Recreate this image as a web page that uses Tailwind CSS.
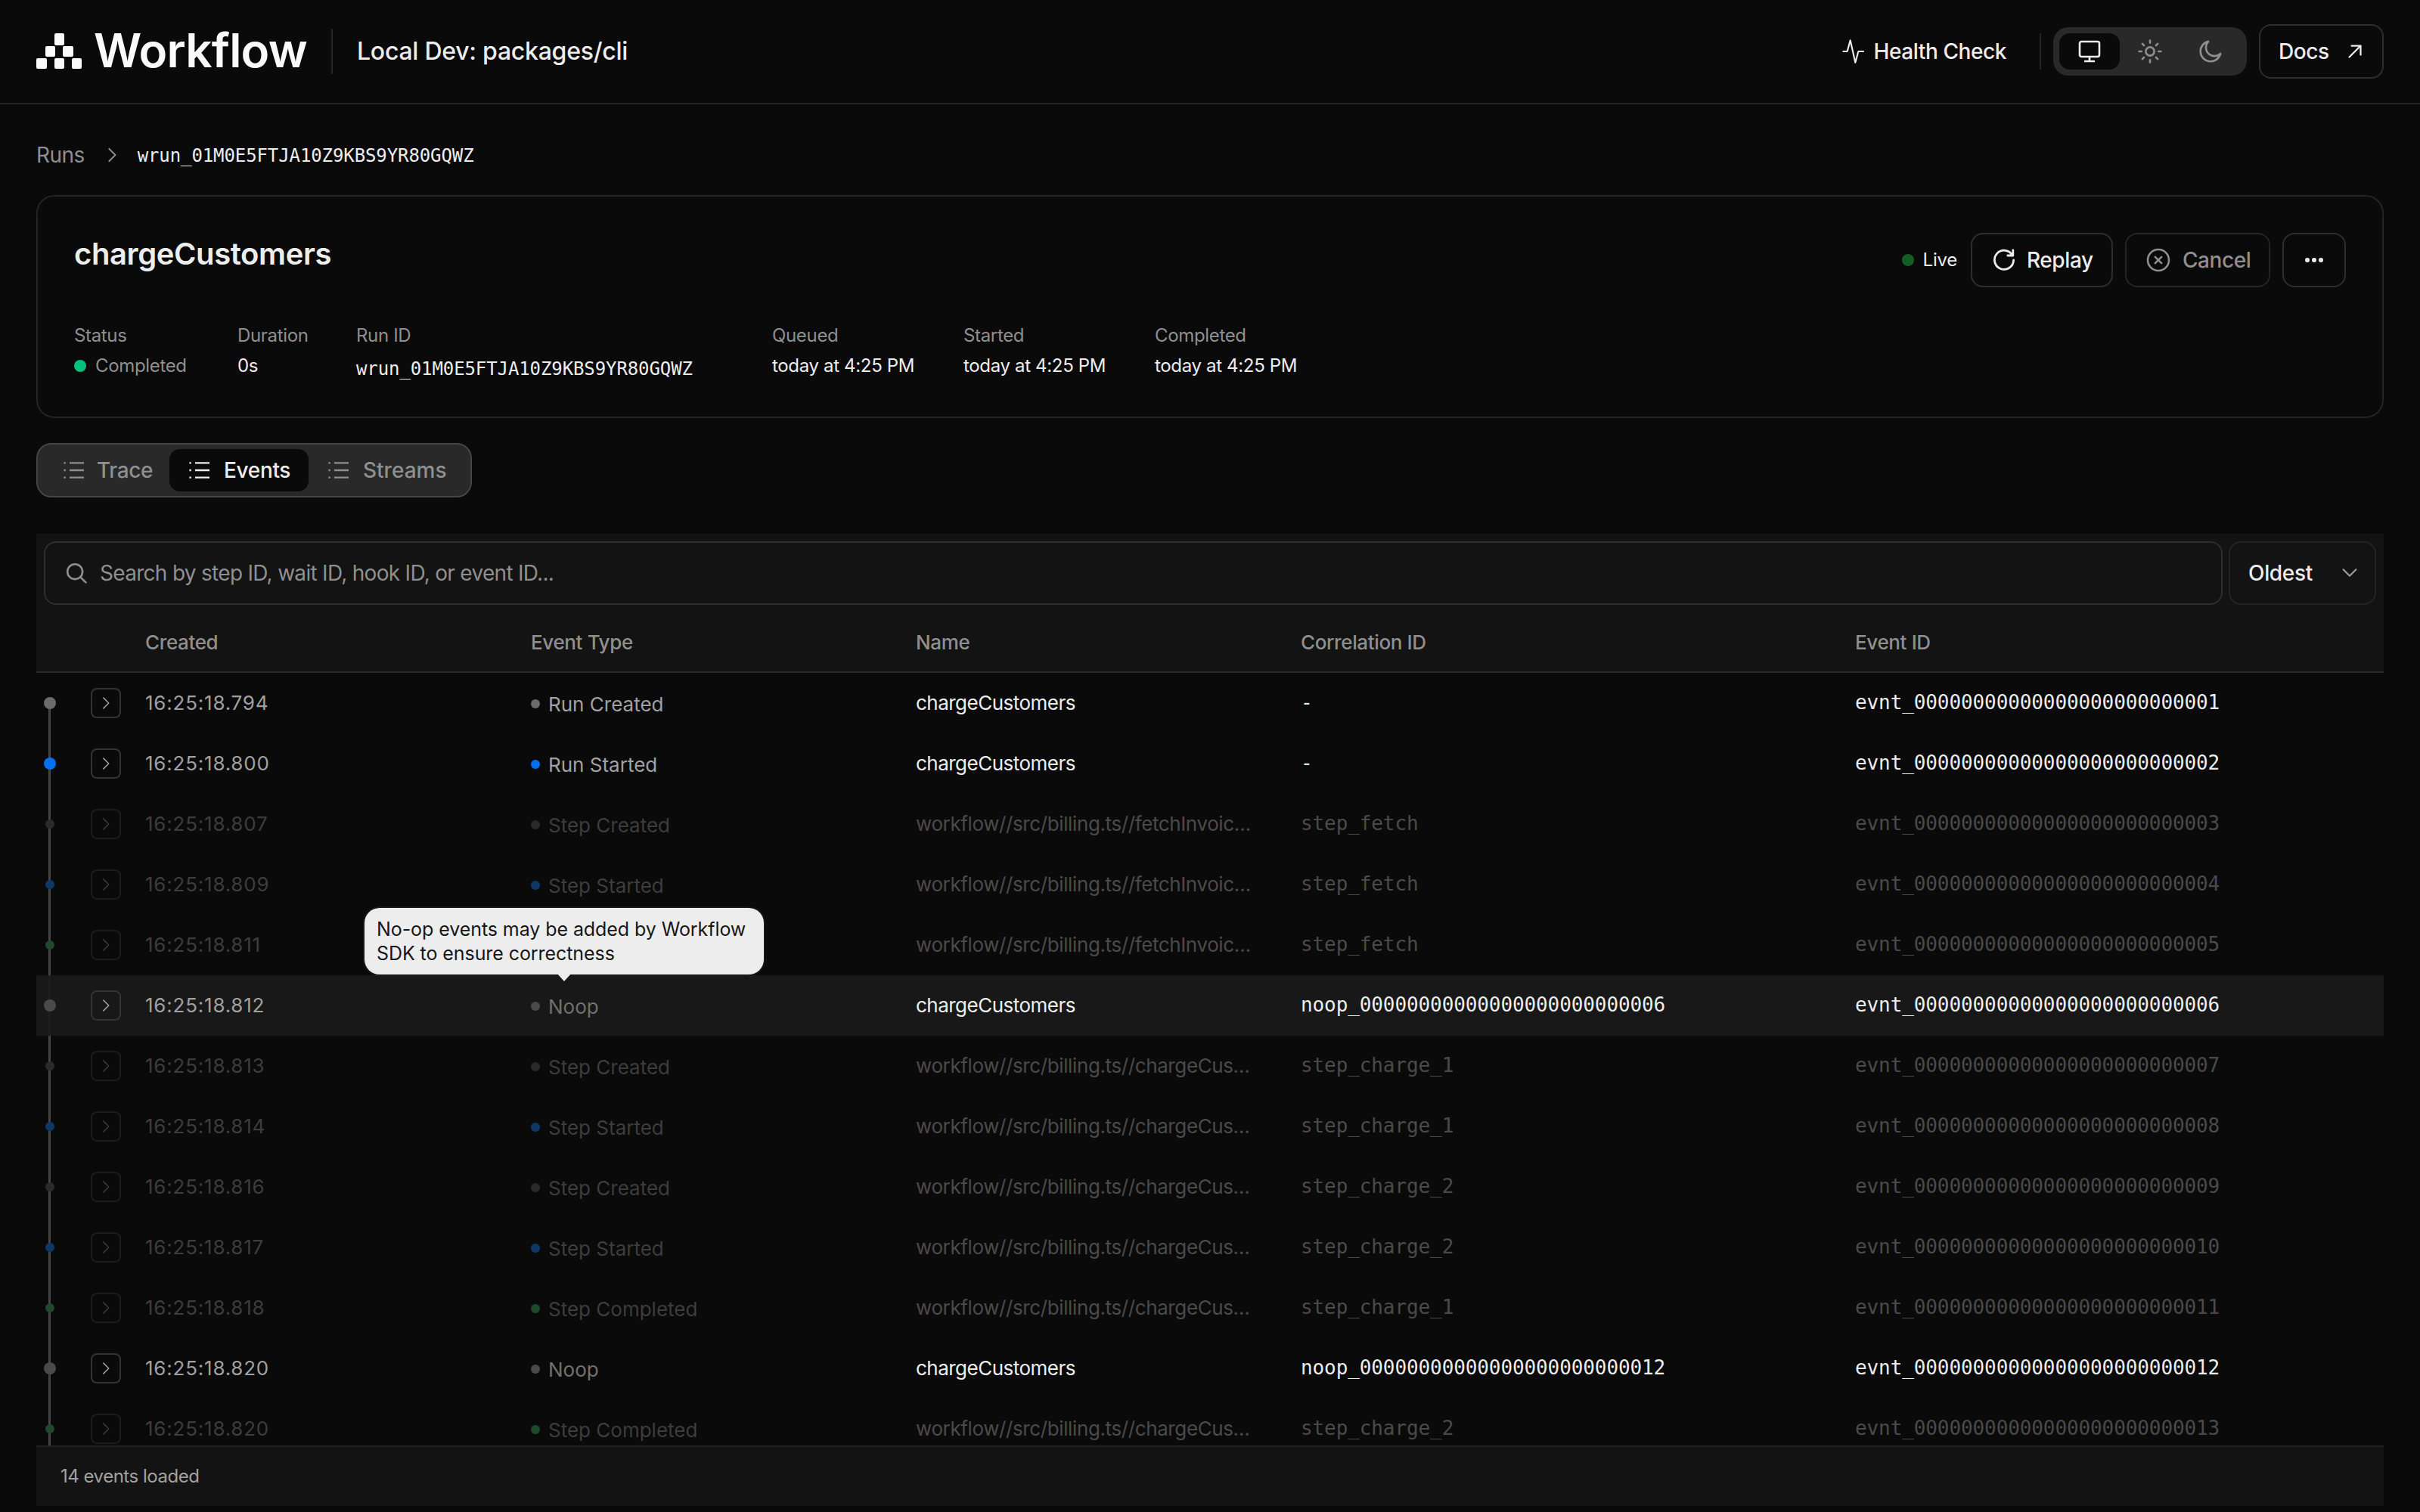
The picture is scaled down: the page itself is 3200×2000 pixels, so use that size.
<!DOCTYPE html>
<html lang="en">
<head>
<meta charset="utf-8">
<title>Workflow</title>
<script src="https://cdn.jsdelivr.net/npm/@tailwindcss/browser@4"></script>
</head>
<body class="bg-[#0a0a0a] font-['Inter',sans-serif] text-[#ededed]">
<div class="w-[3200px] h-[2000px] overflow-hidden flex flex-col">
  <header class="h-[138px] shrink-0 border-b-2 border-[#242424] flex items-center pl-[48px] pr-[48px]">
    <svg class="w-[60px] h-[47px] mt-[-2px]" viewBox="0 0 60 47" fill="#fafafa"><rect x="24" y="0" width="13" height="16" rx="2"/><rect x="12" y="17" width="13" height="14" rx="2"/><rect x="35" y="17" width="14" height="14" rx="2"/><rect x="24" y="33" width="13" height="14" rx="2"/><rect x="0" y="33" width="14" height="14" rx="2"/><rect x="47" y="33" width="13" height="14" rx="2"/></svg>
    <span class="ml-[16px] text-[62px] leading-none font-semibold tracking-[-0.012em] text-[#fafafa] mt-[-2px]">Workflow</span>
    <div class="w-[2px] h-[60px] bg-[#242424] ml-[32px]"></div>
    <span class="ml-[32px] text-[32px] font-medium tracking-[-0.008em] text-[#ededed]">Local Dev: packages/cli</span>
    <div class="ml-auto flex items-center">
      <svg class="w-[32px] h-[32px] text-[#ededed]" viewBox="0 0 24 24" fill="none" stroke="currentColor" stroke-width="1.6" stroke-linecap="round" stroke-linejoin="round"><path d="M1 12h4l3-11 5 22 3-11h5"/></svg>
      <span class="ml-[10px] text-[28px] font-medium tracking-[-0.015em]">Health Check</span>
      <div class="ml-[44px] w-[2px] h-[48px] bg-[#242424]"></div>
      <div class="ml-[16px] w-[256px] h-[64px] rounded-[20px] bg-[#292929] p-[8px] flex">
        <div class="w-[80px] h-[48px] rounded-[14px] bg-[#0a0a0a] flex items-center justify-center">
          <svg class="w-[32px] h-[32px] text-[#ededed]" viewBox="0 0 16 16" fill="none" stroke="currentColor" stroke-width="1.3" stroke-linejoin="round"><rect x="1.5" y="1.5" width="13" height="10" rx="1.2"/><path d="M8 11.5V14.5M4.5 14.5h7"/></svg>
        </div>
        <div class="w-[80px] h-[48px] flex items-center justify-center">
          <svg class="w-[32px] h-[32px] text-[#8f8f8f]" viewBox="0 0 16 16" fill="none" stroke="currentColor" stroke-width="1.3" stroke-linecap="round"><circle cx="8" cy="8" r="2.8"/><path d="M8 .8v1.6M8 13.6v1.6M.8 8h1.6M13.6 8h1.6M2.9 2.9l1.1 1.1M12 12l1.1 1.1M2.9 13.1 4 12M12 4l1.1-1.1"/></svg>
        </div>
        <div class="w-[80px] h-[48px] flex items-center justify-center">
          <svg class="w-[32px] h-[32px] text-[#8f8f8f]" viewBox="0 0 16 16" fill="none" stroke="currentColor" stroke-width="1.3" stroke-linejoin="round"><path d="M6.6 1.4A6.7 6.7 0 1 0 14.6 9.4 5.6 5.6 0 0 1 6.6 1.4Z"/></svg>
        </div>
      </div>
      <div class="ml-[16px] w-[165px] h-[72px] rounded-[16px] border-2 border-[#2e2e2e] flex items-center pl-[24px]">
        <span class="text-[28px] font-medium tracking-[-0.015em]">Docs</span>
        <svg class="ml-[22px] w-[24px] h-[24px]" viewBox="0 0 16 16" fill="none" stroke="currentColor" stroke-width="1.5" stroke-linecap="round" stroke-linejoin="round"><path d="M3 13 13 3M5 3h8v8"/></svg>
      </div>
    </div>
  </header>

  <main class="flex-1 px-[48px] flex flex-col min-h-0">
    <div class="h-[120px] shrink-0 flex items-center pt-[14px]">
      <span class="text-[28px] text-[#8f8f8f] tracking-[-0.02em]">Runs</span>
      <svg class="ml-[24px] w-[24px] h-[24px] text-[#8f8f8f]" viewBox="0 0 16 16" fill="none" stroke="currentColor" stroke-width="1.2" stroke-linecap="round" stroke-linejoin="round"><path d="M5.5 2.5 11 8l-5.5 5.5"/></svg>
      <span class="ml-[22px] mt-[2px] font-['DejaVu_Sans_Mono',monospace] text-[24px] tracking-[-0.1px] text-[#ededed]">wrun_01M0E5FTJA10Z9KBS9YR80GQWZ</span>
    </div>

    <section class="h-[295px] shrink-0 rounded-[24px] border-2 border-[#242424] px-[48px] pt-[48px]">
      <div class="flex items-start justify-between h-[72px]">
        <h1 class="text-[40px] font-semibold tracking-[-0.01em] leading-[56px] text-[#ededed]">chargeCustomers</h1>
        <div class="flex items-center">
          <span class="w-[16px] h-[16px] rounded-full bg-[#165c26]"></span>
          <span class="ml-[12px] text-[24px] tracking-[-0.01em]">Live</span>
          <div class="ml-[18px] w-[188px] h-[72px] rounded-[16px] border-2 border-[#2e2e2e] flex items-center pl-[26px]">
            <svg class="w-[32px] h-[32px]" viewBox="0 0 16 16" fill="none" stroke="currentColor" stroke-width="1.4" stroke-linecap="round" stroke-linejoin="round"><path d="M13.6 5A6.3 6.3 0 1 0 14.3 8M13.9 1.5V5h-3.5"/></svg>
            <span class="ml-[14px] text-[28px] font-medium tracking-[-0.015em]">Replay</span>
          </div>
          <div class="ml-[16px] w-[192px] h-[72px] rounded-[16px] border-2 border-[#242424] flex items-center pl-[26px] text-[#8f8f8f]">
            <svg class="w-[32px] h-[32px]" viewBox="0 0 16 16" fill="none" stroke="currentColor" stroke-width="1.3" stroke-linecap="round"><circle cx="8" cy="8" r="7"/><path d="m5.9 5.9 4.2 4.2M10.1 5.9l-4.2 4.2"/></svg>
            <span class="ml-[16px] text-[28px] font-medium tracking-[-0.015em]">Cancel</span>
          </div>
          <div class="ml-[16px] w-[84px] h-[72px] rounded-[16px] border-2 border-[#2e2e2e] flex items-center justify-center">
            <svg class="w-[28px] h-[10px]" viewBox="0 0 28 10" fill="currentColor"><circle cx="5" cy="5" r="3"/><circle cx="14" cy="5" r="3"/><circle cx="23" cy="5" r="3"/></svg>
          </div>
        </div>
      </div>
      <dl class="mt-[48px] flex items-start text-[24px] tracking-[-0.014em]">
        <div class="w-[152px]">
          <dt class="text-[#8f8f8f] leading-[32px]">Status</dt>
          <dd class="mt-[8px] flex items-center leading-[32px] text-[#8f8f8f]"><span class="w-[16px] h-[16px] rounded-full bg-[#00c27c] mr-[12px]"></span>Completed</dd>
        </div>
        <div class="ml-[64px] w-[93px]">
          <dt class="text-[#8f8f8f] leading-[32px]">Duration</dt>
          <dd class="mt-[8px] leading-[32px] text-[#ededed]">0s</dd>
        </div>
        <div class="ml-[64px] w-[486px]">
          <dt class="text-[#8f8f8f] leading-[32px]">Run ID</dt>
          <dd class="mt-[12px] leading-[32px] text-[#ededed] font-['DejaVu_Sans_Mono',monospace] tracking-[-0.1px]">wrun_01M0E5FTJA10Z9KBS9YR80GQWZ</dd>
        </div>
        <div class="ml-[64px] w-[189px]">
          <dt class="text-[#8f8f8f] leading-[32px]">Queued</dt>
          <dd class="mt-[8px] leading-[32px] text-[#ededed] whitespace-nowrap">today at 4:25 PM</dd>
        </div>
        <div class="ml-[64px] w-[189px]">
          <dt class="text-[#8f8f8f] leading-[32px]">Started</dt>
          <dd class="mt-[8px] leading-[32px] text-[#ededed] whitespace-nowrap">today at 4:25 PM</dd>
        </div>
        <div class="ml-[64px] w-[189px]">
          <dt class="text-[#8f8f8f] leading-[32px]">Completed</dt>
          <dd class="mt-[8px] leading-[32px] text-[#ededed] whitespace-nowrap">today at 4:25 PM</dd>
        </div>
      </dl>
    </section>

    <nav class="mt-[33px] w-[576px] h-[72px] shrink-0 rounded-[20px] bg-[#292929] border-2 border-[#454545] p-[6px] flex text-[28px] font-medium tracking-[-0.012em] text-[#8f8f8f]">
      <div class="w-[168px] flex items-center pl-[26px]">
        <svg class="w-[32px] h-[32px]" viewBox="0 0 16 16" fill="none" stroke="currentColor" stroke-width="1.2"><path d="M5 3.2h9.5M5 8h9.5M5 12.8h9.5M1.2 3.2h1.2M1.2 8h1.2M1.2 12.8h1.2"/></svg>
        <span class="ml-[14px]">Trace</span>
      </div>
      <div class="w-[184px] rounded-[14px] bg-[#0a0a0a] flex items-center pl-[24px] text-[#ededed]">
        <svg class="w-[32px] h-[32px]" viewBox="0 0 16 16" fill="none" stroke="currentColor" stroke-width="1.2"><path d="M5 3.2h9.5M5 8h9.5M5 12.8h9.5M1.2 3.2h1.2M1.2 8h1.2M1.2 12.8h1.2"/></svg>
        <span class="ml-[16px]">Events</span>
      </div>
      <div class="flex-1 flex items-center pl-[24px]">
        <svg class="w-[32px] h-[32px]" viewBox="0 0 16 16" fill="none" stroke="currentColor" stroke-width="1.2"><path d="M5 3.2h9.5M5 8h9.5M5 12.8h9.5M1.2 3.2h1.2M1.2 8h1.2M1.2 12.8h1.2"/></svg>
        <span class="ml-[16px] tracking-normal">Streams</span>
      </div>
    </nav>

    <section class="mt-[48px] h-[1286px] shrink-0 flex flex-col relative">
      <div class="bg-[#131313] border-b-2 border-[#2a2a2a] shrink-0">
        <div class="flex gap-[8px] p-[10px] pb-0">
          <div class="flex-1 h-[84px] rounded-[16px] border-2 border-[#2e2e2e] flex items-center pl-[26px]">
            <svg class="w-[30px] h-[30px] text-[#8f8f8f]" viewBox="0 0 16 16" fill="none" stroke="currentColor" stroke-width="1.4" stroke-linecap="round"><circle cx="7" cy="7" r="5.3"/><path d="m11 11 3.6 3.6"/></svg>
            <span class="ml-[16px] text-[28px] text-[#8f8f8f] tracking-[-0.025em]">Search by step ID, wait ID, hook ID, or event ID...</span>
          </div>
          <div class="w-[195px] h-[84px] rounded-[16px] border-2 border-[#242424] flex items-center pl-[24px]">
            <span class="text-[28px] font-medium tracking-[-0.012em]">Oldest</span>
            <svg class="ml-[34px] w-[30px] h-[30px] text-[#a1a1a1]" viewBox="0 0 16 16" fill="none" stroke="currentColor" stroke-width="1.1" stroke-linecap="round" stroke-linejoin="round"><path d="m3.5 5.5 4.5 4.5 4.5-4.5"/></svg>
          </div>
        </div>
        <div class="h-[88px] pt-[10px] flex items-center text-[26px] font-medium tracking-[-0.014em] text-[#8f8f8f]">
          <div class="w-[144px] shrink-0"></div>
          <div class="w-[510px]">Created</div>
          <div class="w-[509px]">Event Type</div>
          <div class="w-[509px]">Name</div>
          <div class="w-[733px]">Correlation ID</div>
          <div>Event ID</div>
        </div>
      </div>

      <div class="flex-1 min-h-0 overflow-hidden relative text-[26px]">
        <div class="absolute left-[16px] top-[40px] bottom-0 w-[3px] bg-[#454545]"></div>

        <div class="relative h-[80px] flex items-center">
          <div class="w-[144px] shrink-0 flex items-center"><div class="ml-[10px] w-[16px] flex justify-center"><span class="w-[16px] h-[16px] rounded-full bg-[#6b6b6b]"></span></div><div class="ml-[46px] w-[40px] h-[40px] rounded-[8px] border-2 border-[#333] flex items-center justify-center text-[#a1a1a1]"><svg class="w-[20px] h-[20px]" viewBox="0 0 16 16" fill="none" stroke="currentColor" stroke-width="1.2" stroke-linecap="round" stroke-linejoin="round"><path d="M5.5 2.5 11 8l-5.5 5.5"/></svg></div></div>
          <div class="w-[510px] pb-[2px] tracking-[0.03em] text-[#a1a1a1]">16:25:18.794</div>
          <div class="w-[509px] flex items-center pt-[2px] text-[#a1a1a1]"><span class="w-[12px] h-[12px] rounded-full bg-[#6b6b6b] mr-[11px]"></span>Run Created</div>
          <div class="w-[509px] pb-[2px] pr-[65px] truncate tracking-[-0.02em] text-[#ededed]">chargeCustomers</div>
          <div class="w-[733px] pb-[2px] font-['DejaVu_Sans_Mono',monospace] tracking-[-0.1px] text-[#ededed]">-</div>
          <div class="pb-[2px] font-['DejaVu_Sans_Mono',monospace] tracking-[-0.1px] text-[#ededed]">evnt_00000000000000000000000001</div>
        </div>

        <div class="relative h-[80px] flex items-center">
          <div class="w-[144px] shrink-0 flex items-center"><div class="ml-[10px] w-[16px] flex justify-center"><span class="w-[16px] h-[16px] rounded-full bg-[#0070f3]"></span></div><div class="ml-[46px] w-[40px] h-[40px] rounded-[8px] border-2 border-[#333] flex items-center justify-center text-[#a1a1a1]"><svg class="w-[20px] h-[20px]" viewBox="0 0 16 16" fill="none" stroke="currentColor" stroke-width="1.2" stroke-linecap="round" stroke-linejoin="round"><path d="M5.5 2.5 11 8l-5.5 5.5"/></svg></div></div>
          <div class="w-[510px] pb-[2px] tracking-[0.03em] text-[#a1a1a1]">16:25:18.800</div>
          <div class="w-[509px] flex items-center pt-[2px] text-[#a1a1a1]"><span class="w-[12px] h-[12px] rounded-full bg-[#0070f3] mr-[11px]"></span>Run Started</div>
          <div class="w-[509px] pb-[2px] pr-[65px] truncate tracking-[-0.02em] text-[#ededed]">chargeCustomers</div>
          <div class="w-[733px] pb-[2px] font-['DejaVu_Sans_Mono',monospace] tracking-[-0.1px] text-[#ededed]">-</div>
          <div class="pb-[2px] font-['DejaVu_Sans_Mono',monospace] tracking-[-0.1px] text-[#ededed]">evnt_00000000000000000000000002</div>
        </div>

        <div class="relative h-[80px] flex items-center">
          <div class="w-[144px] shrink-0 flex items-center"><div class="ml-[10px] w-[16px] flex justify-center"><span class="w-[12px] h-[12px] rounded-full bg-[#2a2a2a]"></span></div><div class="ml-[46px] w-[40px] h-[40px] rounded-[8px] border-2 border-[#1c1c1c] flex items-center justify-center text-[#3a3a3a]"><svg class="w-[20px] h-[20px]" viewBox="0 0 16 16" fill="none" stroke="currentColor" stroke-width="1.2" stroke-linecap="round" stroke-linejoin="round"><path d="M5.5 2.5 11 8l-5.5 5.5"/></svg></div></div>
          <div class="w-[510px] pb-[2px] tracking-[0.03em] text-[#3d3d3d]">16:25:18.807</div>
          <div class="w-[509px] flex items-center pt-[2px] text-[#3d3d3d]"><span class="w-[12px] h-[12px] rounded-full bg-[#2a2a2a] mr-[11px]"></span>Step Created</div>
          <div class="w-[509px] pb-[2px] pr-[65px] truncate tracking-[-0.015em] text-[#4a4a4a]">workflow//src/billing.ts//fetchInvoiceBatch</div>
          <div class="w-[733px] pb-[2px] font-['DejaVu_Sans_Mono',monospace] tracking-[-0.1px] text-[#4a4a4a]">step_fetch</div>
          <div class="pb-[2px] font-['DejaVu_Sans_Mono',monospace] tracking-[-0.1px] text-[#4a4a4a]">evnt_00000000000000000000000003</div>
        </div>

        <div class="relative h-[80px] flex items-center">
          <div class="w-[144px] shrink-0 flex items-center"><div class="ml-[10px] w-[16px] flex justify-center"><span class="w-[12px] h-[12px] rounded-full bg-[#0c3a66]"></span></div><div class="ml-[46px] w-[40px] h-[40px] rounded-[8px] border-2 border-[#1c1c1c] flex items-center justify-center text-[#3a3a3a]"><svg class="w-[20px] h-[20px]" viewBox="0 0 16 16" fill="none" stroke="currentColor" stroke-width="1.2" stroke-linecap="round" stroke-linejoin="round"><path d="M5.5 2.5 11 8l-5.5 5.5"/></svg></div></div>
          <div class="w-[510px] pb-[2px] tracking-[0.03em] text-[#3d3d3d]">16:25:18.809</div>
          <div class="w-[509px] flex items-center pt-[2px] text-[#3d3d3d]"><span class="w-[12px] h-[12px] rounded-full bg-[#0c3a66] mr-[11px]"></span>Step Started</div>
          <div class="w-[509px] pb-[2px] pr-[65px] truncate tracking-[-0.015em] text-[#4a4a4a]">workflow//src/billing.ts//fetchInvoiceBatch</div>
          <div class="w-[733px] pb-[2px] font-['DejaVu_Sans_Mono',monospace] tracking-[-0.1px] text-[#4a4a4a]">step_fetch</div>
          <div class="pb-[2px] font-['DejaVu_Sans_Mono',monospace] tracking-[-0.1px] text-[#4a4a4a]">evnt_00000000000000000000000004</div>
        </div>

        <div class="relative h-[80px] flex items-center">
          <div class="w-[144px] shrink-0 flex items-center"><div class="ml-[10px] w-[16px] flex justify-center"><span class="w-[12px] h-[12px] rounded-full bg-[#1f4a2a]"></span></div><div class="ml-[46px] w-[40px] h-[40px] rounded-[8px] border-2 border-[#1c1c1c] flex items-center justify-center text-[#3a3a3a]"><svg class="w-[20px] h-[20px]" viewBox="0 0 16 16" fill="none" stroke="currentColor" stroke-width="1.2" stroke-linecap="round" stroke-linejoin="round"><path d="M5.5 2.5 11 8l-5.5 5.5"/></svg></div></div>
          <div class="w-[510px] pb-[2px] tracking-[0.03em] text-[#3d3d3d]">16:25:18.811</div>
          <div class="w-[509px] flex items-center pt-[2px] text-[#3d3d3d]"><span class="w-[12px] h-[12px] rounded-full bg-[#1f4a2a] mr-[11px]"></span>Step Completed</div>
          <div class="w-[509px] pb-[2px] pr-[65px] truncate tracking-[-0.015em] text-[#4a4a4a]">workflow//src/billing.ts//fetchInvoiceBatch</div>
          <div class="w-[733px] pb-[2px] font-['DejaVu_Sans_Mono',monospace] tracking-[-0.1px] text-[#4a4a4a]">step_fetch</div>
          <div class="pb-[2px] font-['DejaVu_Sans_Mono',monospace] tracking-[-0.1px] text-[#4a4a4a]">evnt_00000000000000000000000005</div>
        </div>

        <div class="relative h-[80px] flex items-center bg-[#191919]/90">
          <div class="w-[144px] shrink-0 flex items-center"><div class="ml-[10px] w-[16px] flex justify-center"><span class="w-[16px] h-[16px] rounded-full bg-[#4a4a4a]"></span></div><div class="ml-[46px] w-[40px] h-[40px] rounded-[8px] border-2 border-[#333] flex items-center justify-center text-[#a1a1a1]"><svg class="w-[20px] h-[20px]" viewBox="0 0 16 16" fill="none" stroke="currentColor" stroke-width="1.2" stroke-linecap="round" stroke-linejoin="round"><path d="M5.5 2.5 11 8l-5.5 5.5"/></svg></div></div>
          <div class="w-[510px] pb-[2px] tracking-[0.03em] text-[#a1a1a1]">16:25:18.812</div>
          <div class="w-[509px] flex items-center pt-[2px] text-[#707070]"><span class="w-[12px] h-[12px] rounded-full bg-[#4a4a4a] mr-[11px]"></span>Noop</div>
          <div class="w-[509px] pb-[2px] pr-[65px] truncate tracking-[-0.02em] text-[#ededed]">chargeCustomers</div>
          <div class="w-[733px] pb-[2px] font-['DejaVu_Sans_Mono',monospace] tracking-[-0.1px] text-[#ededed]">noop_00000000000000000000000006</div>
          <div class="pb-[2px] font-['DejaVu_Sans_Mono',monospace] tracking-[-0.1px] text-[#ededed]">evnt_00000000000000000000000006</div>
        </div>

        <div class="relative h-[80px] flex items-center">
          <div class="w-[144px] shrink-0 flex items-center"><div class="ml-[10px] w-[16px] flex justify-center"><span class="w-[12px] h-[12px] rounded-full bg-[#2a2a2a]"></span></div><div class="ml-[46px] w-[40px] h-[40px] rounded-[8px] border-2 border-[#1c1c1c] flex items-center justify-center text-[#3a3a3a]"><svg class="w-[20px] h-[20px]" viewBox="0 0 16 16" fill="none" stroke="currentColor" stroke-width="1.2" stroke-linecap="round" stroke-linejoin="round"><path d="M5.5 2.5 11 8l-5.5 5.5"/></svg></div></div>
          <div class="w-[510px] pb-[2px] tracking-[0.03em] text-[#3d3d3d]">16:25:18.813</div>
          <div class="w-[509px] flex items-center pt-[2px] text-[#3d3d3d]"><span class="w-[12px] h-[12px] rounded-full bg-[#2a2a2a] mr-[11px]"></span>Step Created</div>
          <div class="w-[509px] pb-[2px] pr-[65px] truncate tracking-[-0.015em] text-[#4a4a4a]">workflow//src/billing.ts//chargeCustomer</div>
          <div class="w-[733px] pb-[2px] font-['DejaVu_Sans_Mono',monospace] tracking-[-0.1px] text-[#4a4a4a]">step_charge_1</div>
          <div class="pb-[2px] font-['DejaVu_Sans_Mono',monospace] tracking-[-0.1px] text-[#4a4a4a]">evnt_00000000000000000000000007</div>
        </div>

        <div class="relative h-[80px] flex items-center">
          <div class="w-[144px] shrink-0 flex items-center"><div class="ml-[10px] w-[16px] flex justify-center"><span class="w-[12px] h-[12px] rounded-full bg-[#0c3a66]"></span></div><div class="ml-[46px] w-[40px] h-[40px] rounded-[8px] border-2 border-[#1c1c1c] flex items-center justify-center text-[#3a3a3a]"><svg class="w-[20px] h-[20px]" viewBox="0 0 16 16" fill="none" stroke="currentColor" stroke-width="1.2" stroke-linecap="round" stroke-linejoin="round"><path d="M5.5 2.5 11 8l-5.5 5.5"/></svg></div></div>
          <div class="w-[510px] pb-[2px] tracking-[0.03em] text-[#3d3d3d]">16:25:18.814</div>
          <div class="w-[509px] flex items-center pt-[2px] text-[#3d3d3d]"><span class="w-[12px] h-[12px] rounded-full bg-[#0c3a66] mr-[11px]"></span>Step Started</div>
          <div class="w-[509px] pb-[2px] pr-[65px] truncate tracking-[-0.015em] text-[#4a4a4a]">workflow//src/billing.ts//chargeCustomer</div>
          <div class="w-[733px] pb-[2px] font-['DejaVu_Sans_Mono',monospace] tracking-[-0.1px] text-[#4a4a4a]">step_charge_1</div>
          <div class="pb-[2px] font-['DejaVu_Sans_Mono',monospace] tracking-[-0.1px] text-[#4a4a4a]">evnt_00000000000000000000000008</div>
        </div>

        <div class="relative h-[80px] flex items-center">
          <div class="w-[144px] shrink-0 flex items-center"><div class="ml-[10px] w-[16px] flex justify-center"><span class="w-[12px] h-[12px] rounded-full bg-[#2a2a2a]"></span></div><div class="ml-[46px] w-[40px] h-[40px] rounded-[8px] border-2 border-[#1c1c1c] flex items-center justify-center text-[#3a3a3a]"><svg class="w-[20px] h-[20px]" viewBox="0 0 16 16" fill="none" stroke="currentColor" stroke-width="1.2" stroke-linecap="round" stroke-linejoin="round"><path d="M5.5 2.5 11 8l-5.5 5.5"/></svg></div></div>
          <div class="w-[510px] pb-[2px] tracking-[0.03em] text-[#3d3d3d]">16:25:18.816</div>
          <div class="w-[509px] flex items-center pt-[2px] text-[#3d3d3d]"><span class="w-[12px] h-[12px] rounded-full bg-[#2a2a2a] mr-[11px]"></span>Step Created</div>
          <div class="w-[509px] pb-[2px] pr-[65px] truncate tracking-[-0.015em] text-[#4a4a4a]">workflow//src/billing.ts//chargeCustomer</div>
          <div class="w-[733px] pb-[2px] font-['DejaVu_Sans_Mono',monospace] tracking-[-0.1px] text-[#4a4a4a]">step_charge_2</div>
          <div class="pb-[2px] font-['DejaVu_Sans_Mono',monospace] tracking-[-0.1px] text-[#4a4a4a]">evnt_00000000000000000000000009</div>
        </div>

        <div class="relative h-[80px] flex items-center">
          <div class="w-[144px] shrink-0 flex items-center"><div class="ml-[10px] w-[16px] flex justify-center"><span class="w-[12px] h-[12px] rounded-full bg-[#0c3a66]"></span></div><div class="ml-[46px] w-[40px] h-[40px] rounded-[8px] border-2 border-[#1c1c1c] flex items-center justify-center text-[#3a3a3a]"><svg class="w-[20px] h-[20px]" viewBox="0 0 16 16" fill="none" stroke="currentColor" stroke-width="1.2" stroke-linecap="round" stroke-linejoin="round"><path d="M5.5 2.5 11 8l-5.5 5.5"/></svg></div></div>
          <div class="w-[510px] pb-[2px] tracking-[0.03em] text-[#3d3d3d]">16:25:18.817</div>
          <div class="w-[509px] flex items-center pt-[2px] text-[#3d3d3d]"><span class="w-[12px] h-[12px] rounded-full bg-[#0c3a66] mr-[11px]"></span>Step Started</div>
          <div class="w-[509px] pb-[2px] pr-[65px] truncate tracking-[-0.015em] text-[#4a4a4a]">workflow//src/billing.ts//chargeCustomer</div>
          <div class="w-[733px] pb-[2px] font-['DejaVu_Sans_Mono',monospace] tracking-[-0.1px] text-[#4a4a4a]">step_charge_2</div>
          <div class="pb-[2px] font-['DejaVu_Sans_Mono',monospace] tracking-[-0.1px] text-[#4a4a4a]">evnt_00000000000000000000000010</div>
        </div>

        <div class="relative h-[80px] flex items-center">
          <div class="w-[144px] shrink-0 flex items-center"><div class="ml-[10px] w-[16px] flex justify-center"><span class="w-[12px] h-[12px] rounded-full bg-[#1f4a2a]"></span></div><div class="ml-[46px] w-[40px] h-[40px] rounded-[8px] border-2 border-[#1c1c1c] flex items-center justify-center text-[#3a3a3a]"><svg class="w-[20px] h-[20px]" viewBox="0 0 16 16" fill="none" stroke="currentColor" stroke-width="1.2" stroke-linecap="round" stroke-linejoin="round"><path d="M5.5 2.5 11 8l-5.5 5.5"/></svg></div></div>
          <div class="w-[510px] pb-[2px] tracking-[0.03em] text-[#3d3d3d]">16:25:18.818</div>
          <div class="w-[509px] flex items-center pt-[2px] text-[#3d3d3d]"><span class="w-[12px] h-[12px] rounded-full bg-[#1f4a2a] mr-[11px]"></span>Step Completed</div>
          <div class="w-[509px] pb-[2px] pr-[65px] truncate tracking-[-0.015em] text-[#4a4a4a]">workflow//src/billing.ts//chargeCustomer</div>
          <div class="w-[733px] pb-[2px] font-['DejaVu_Sans_Mono',monospace] tracking-[-0.1px] text-[#4a4a4a]">step_charge_1</div>
          <div class="pb-[2px] font-['DejaVu_Sans_Mono',monospace] tracking-[-0.1px] text-[#4a4a4a]">evnt_00000000000000000000000011</div>
        </div>

        <div class="relative h-[80px] flex items-center">
          <div class="w-[144px] shrink-0 flex items-center"><div class="ml-[10px] w-[16px] flex justify-center"><span class="w-[16px] h-[16px] rounded-full bg-[#4a4a4a]"></span></div><div class="ml-[46px] w-[40px] h-[40px] rounded-[8px] border-2 border-[#333] flex items-center justify-center text-[#a1a1a1]"><svg class="w-[20px] h-[20px]" viewBox="0 0 16 16" fill="none" stroke="currentColor" stroke-width="1.2" stroke-linecap="round" stroke-linejoin="round"><path d="M5.5 2.5 11 8l-5.5 5.5"/></svg></div></div>
          <div class="w-[510px] pb-[2px] tracking-[0.03em] text-[#a1a1a1]">16:25:18.820</div>
          <div class="w-[509px] flex items-center pt-[2px] text-[#707070]"><span class="w-[12px] h-[12px] rounded-full bg-[#4a4a4a] mr-[11px]"></span>Noop</div>
          <div class="w-[509px] pb-[2px] pr-[65px] truncate tracking-[-0.02em] text-[#ededed]">chargeCustomers</div>
          <div class="w-[733px] pb-[2px] font-['DejaVu_Sans_Mono',monospace] tracking-[-0.1px] text-[#ededed]">noop_00000000000000000000000012</div>
          <div class="pb-[2px] font-['DejaVu_Sans_Mono',monospace] tracking-[-0.1px] text-[#ededed]">evnt_00000000000000000000000012</div>
        </div>

        <div class="relative h-[80px] flex items-center">
          <div class="w-[144px] shrink-0 flex items-center"><div class="ml-[10px] w-[16px] flex justify-center"><span class="w-[12px] h-[12px] rounded-full bg-[#1f4a2a]"></span></div><div class="ml-[46px] w-[40px] h-[40px] rounded-[8px] border-2 border-[#1c1c1c] flex items-center justify-center text-[#3a3a3a]"><svg class="w-[20px] h-[20px]" viewBox="0 0 16 16" fill="none" stroke="currentColor" stroke-width="1.2" stroke-linecap="round" stroke-linejoin="round"><path d="M5.5 2.5 11 8l-5.5 5.5"/></svg></div></div>
          <div class="w-[510px] pb-[2px] tracking-[0.03em] text-[#3d3d3d]">16:25:18.820</div>
          <div class="w-[509px] flex items-center pt-[2px] text-[#3d3d3d]"><span class="w-[12px] h-[12px] rounded-full bg-[#1f4a2a] mr-[11px]"></span>Step Completed</div>
          <div class="w-[509px] pb-[2px] pr-[65px] truncate tracking-[-0.015em] text-[#4a4a4a]">workflow//src/billing.ts//chargeCustomer</div>
          <div class="w-[733px] pb-[2px] font-['DejaVu_Sans_Mono',monospace] tracking-[-0.1px] text-[#4a4a4a]">step_charge_2</div>
          <div class="pb-[2px] font-['DejaVu_Sans_Mono',monospace] tracking-[-0.1px] text-[#4a4a4a]">evnt_00000000000000000000000013</div>
        </div>
      </div>

      <footer class="h-[80px] shrink-0 bg-[#131313] border-t-2 border-[#242424] flex items-center pl-[32px] text-[24px] tracking-[-0.02em] text-[#a1a1a1]">14 events loaded</footer>

      <div class="absolute left-[434px] top-[495px] w-[528px] h-[88px] rounded-[20px] bg-[#ededed] px-[16px] py-[12px] text-[25px] leading-[32px] tracking-[-0.003em] whitespace-nowrap text-[#171717] shadow-[0_0_0_2px_#1a1a1a]">
        No-op events may be added by Workflow<br>SDK to ensure correctness
        <span class="absolute left-[254px] top-[86px] w-0 h-0 border-x-[10px] border-x-transparent border-t-[11px] border-t-[#ededed]"></span>
      </div>
    </section>
  </main>
</div>
</body>
</html>
